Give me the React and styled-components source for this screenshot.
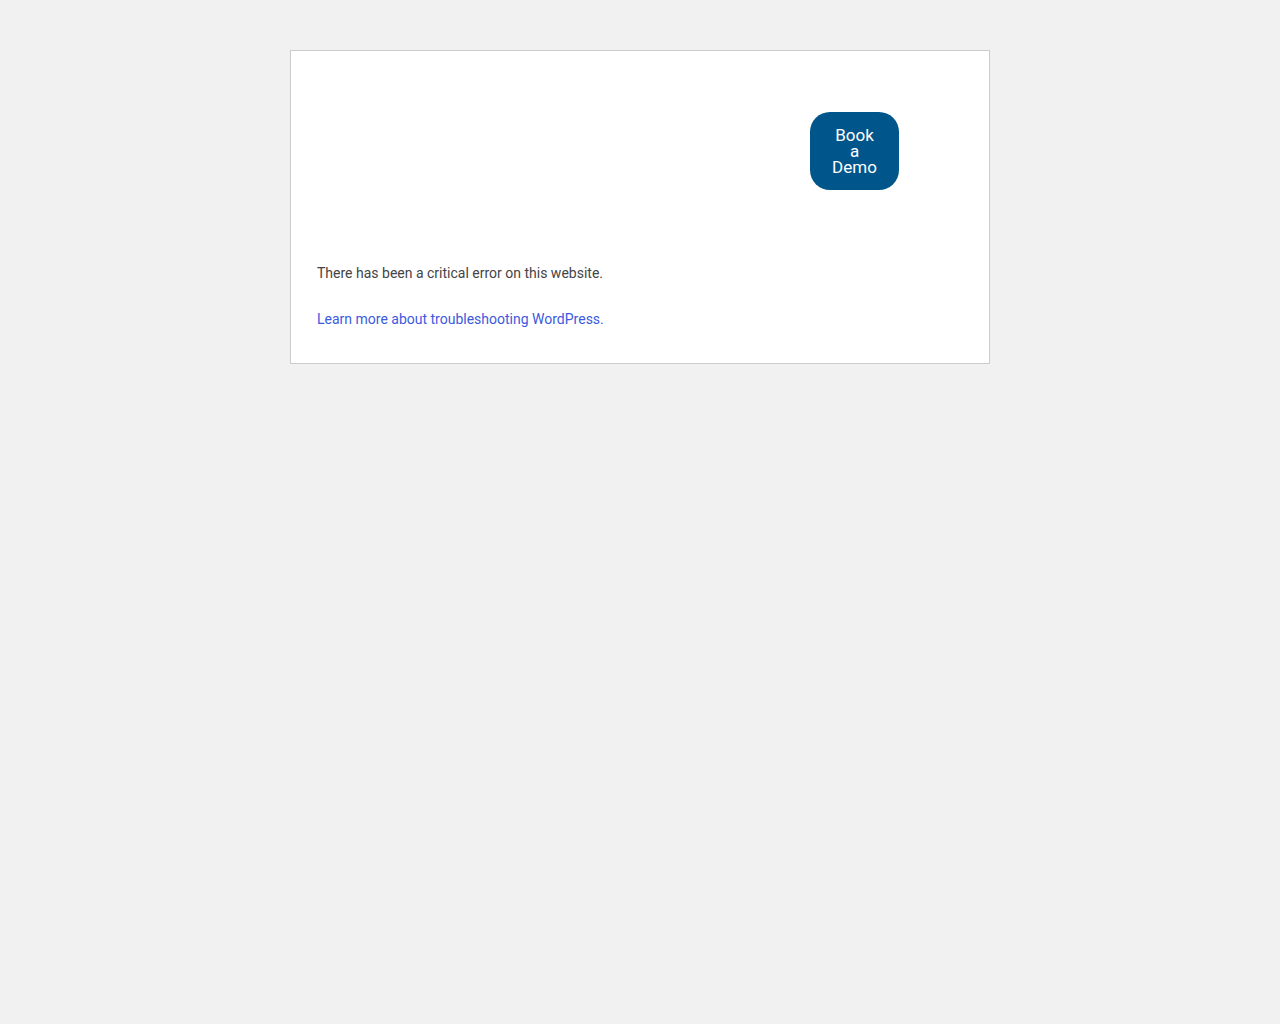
import React from 'react'
import styled, { createGlobalStyle } from 'styled-components'

const GlobalStyle = createGlobalStyle`
    html {
        background: #f1f1f1;
    }
    body {
        margin: 0;
        background: #f1f1f1;
        font-family: Roboto, "Liberation Sans", sans-serif;
        color: #444;
        font-size: 13px;
    }
`

const ErrorBox = styled.div`
    box-sizing: border-box;
    width: 700px;
    margin: 50px auto 0;
    padding: 13px 26px;
    background: #fff;
    border: 1px solid #ccc;
    box-shadow: 0 1px 1px rgba(0, 0, 0, 0.04);
`

const Header = styled.div`
    height: 174px;
    display: flex;
    align-items: center;
    justify-content: flex-end;
    padding-right: 64px;
`

const DemoButton = styled.a`
    display: block;
    width: 89px;
    box-sizing: border-box;
    padding: 15px 0;
    background: #00558b;
    border-radius: 20px;
    color: #fff;
    font-size: 17px;
    line-height: 16px;
    text-align: center;
    text-decoration: none;
    cursor: pointer;

    span {
        display: block;
    }
`

const Message = styled.p`
    font-size: 14px;
    line-height: 1.5;
    margin: 25px 0 20px;
    color: #444;

    a {
        color: #3c5ade;
        text-decoration: none;
    }
`

const App = () => {
    return (
        <>
            <GlobalStyle />
            <ErrorBox>
                <Header>
                    <DemoButton>
                        <span>Book</span>
                        <span>a</span>
                        <span>Demo</span>
                    </DemoButton>
                </Header>
                <Message>There has been a critical error on this website.</Message>
                <Message>
                    <a href="#">Learn more about troubleshooting WordPress.</a>
                </Message>
            </ErrorBox>
        </>
    )
}

export default App
